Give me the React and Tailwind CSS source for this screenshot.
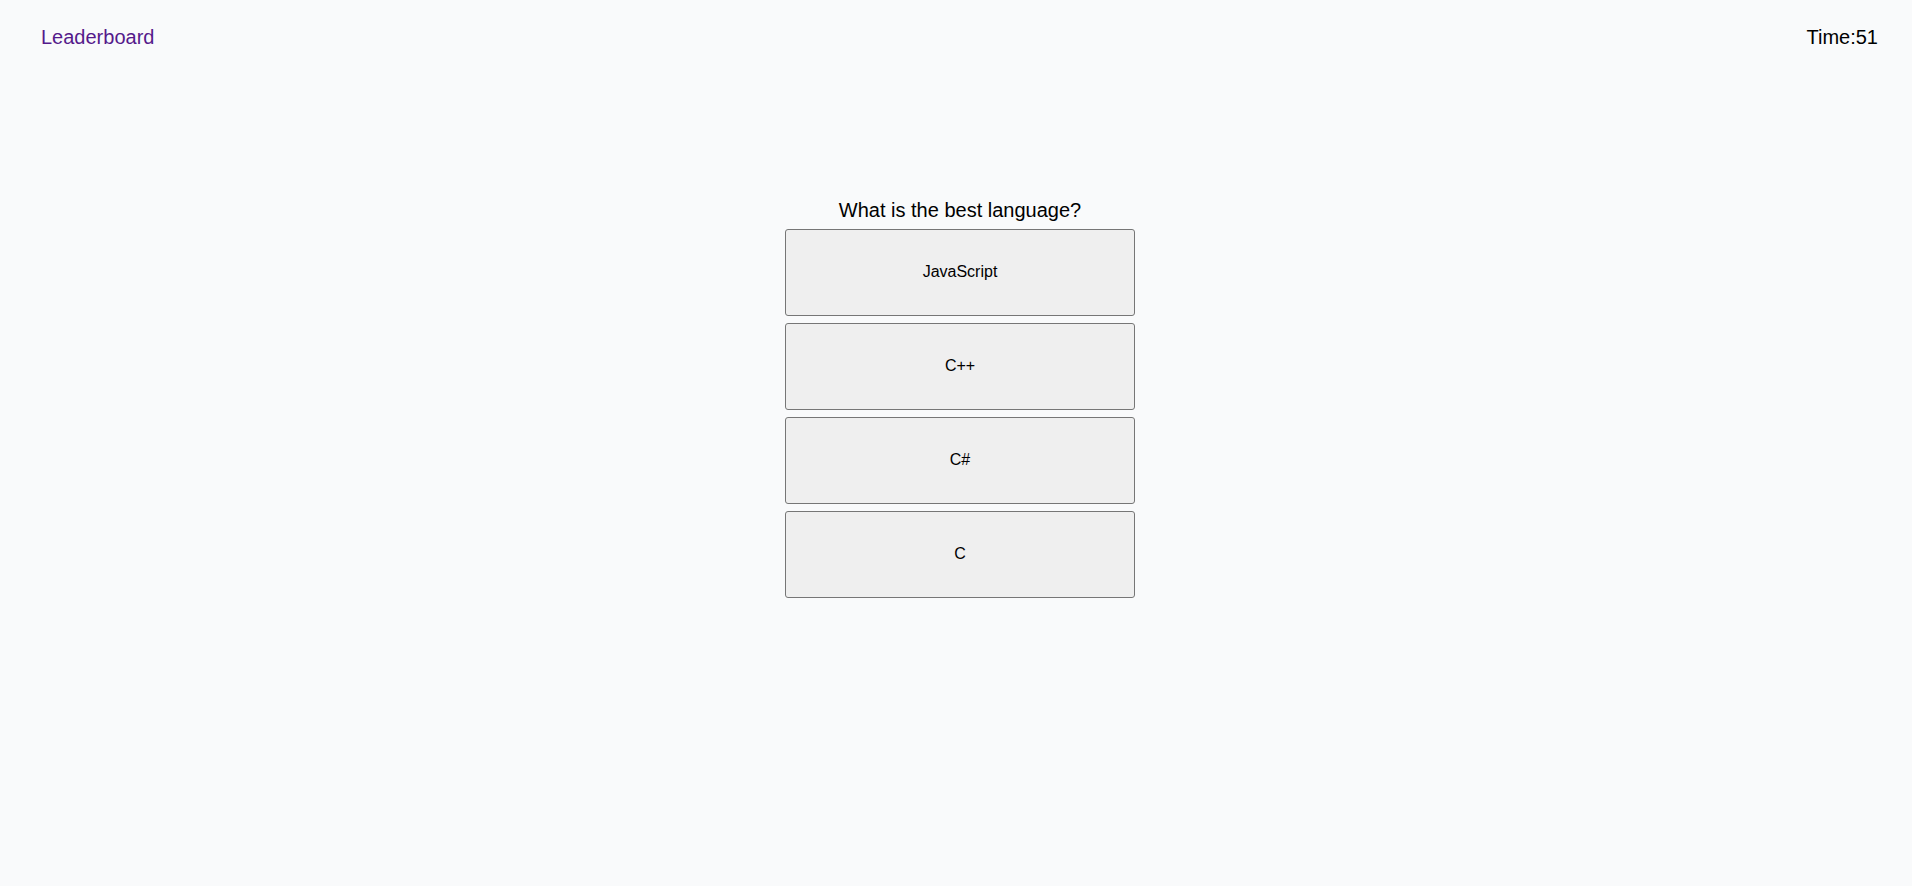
import React from 'react';

const answers = ['JavaScript', 'C++', 'C#', 'C'];

const App = () => {
    return (
        <div className="min-h-[886px] bg-[#f9fafb] text-black" style={{ fontFamily: '"Liberation Sans", Arial, sans-serif' }}>
            {/* Top bar */}
            <div className="flex items-center justify-between pl-[41px] pr-[34px] pt-[26px]">
                <a href="#" className="text-[20px] leading-[23px] text-[#551a8b]">Leaderboard</a>
                <span className="text-[20px] leading-[23px]">Time:51</span>
            </div>

            {/* Quiz */}
            <div className="flex justify-center pl-[8px] pt-[150px]">
                <div className="flex w-[350px] flex-col items-center gap-[7px]">
                    <h2 className="text-[20px] leading-[23px]">What is the best language?</h2>
                    {answers.map((a) => (
                        <button key={a}
                            className="h-[87px] w-full rounded-[3px] border border-[#767676] bg-[#efefef] pb-[2px] text-[16px] text-black">
                            {a}
                        </button>
                    ))}
                </div>
            </div>
        </div>
    );
};

export default App;
